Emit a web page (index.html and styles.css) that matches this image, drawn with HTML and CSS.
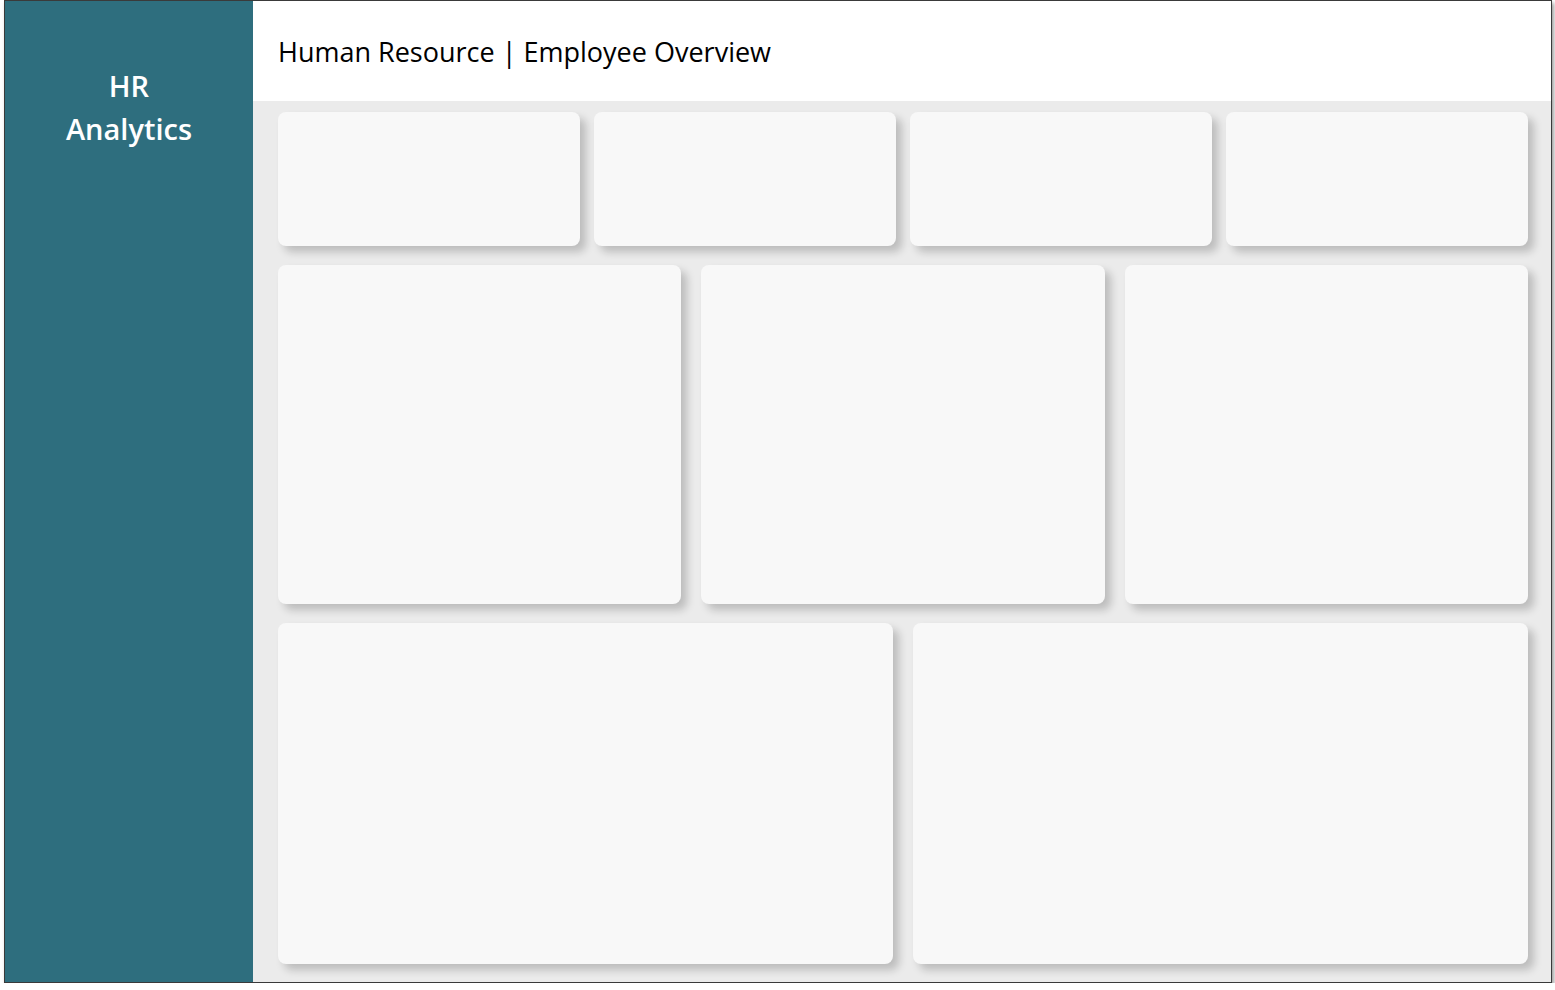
FILE: index.html
```html
<!DOCTYPE html>
<html lang="en">
<head>
    <meta charset="UTF-8">
    <meta name="viewport" content="width=device-width, initial-scale=1.0">
    <title>HR Analytics</title>
    <link rel="stylesheet" href="styles.css">
</head>
<body>

    <div class="frame">
        <aside class="sidebar">
            <h1>HR<br>Analytics</h1>
        </aside>

        <main class="main">
            <header class="header">
                Human Resource | Employee Overview
            </header>

            <div class="content">
                <div class="row row-kpi">
                    <div class="card"></div>
                    <div class="card"></div>
                    <div class="card"></div>
                    <div class="card"></div>
                </div>

                <div class="row row-mid">
                    <div class="card"></div>
                    <div class="card"></div>
                    <div class="card"></div>
                </div>

                <div class="row row-bottom">
                    <div class="card"></div>
                    <div class="card"></div>
                </div>
            </div>
        </main>
    </div>

</body>
</html>
```

FILE: styles.css
```css
body {
    margin: 0;
    padding: 0 0 0 4px;
    font-family: 'Open Sans', 'Noto Sans', sans-serif;
    background: #ffffff;
}

.frame {
    display: flex;
    width: 1548px;
    height: 983px;
    box-sizing: border-box;
    border: 1px solid #3a3a3a;
    box-shadow: 2px 3px 4px rgba(0, 0, 0, 0.4);
}

.sidebar {
    width: 248px;
    flex-shrink: 0;
    background: #2e6e7e;
    color: #ffffff;
    text-align: center;
}

.sidebar h1 {
    margin: 63px 0 0;
    font-size: 29px;
    font-weight: 600;
    line-height: 43px;
}

.main {
    flex: 1;
    display: flex;
    flex-direction: column;
    background: #ebebeb;
}

.header {
    height: 100px;
    flex-shrink: 0;
    background: #ffffff;
    color: #000000;
    font-size: 27px;
    padding-left: 25px;
    display: flex;
    align-items: center;
    box-sizing: border-box;
    padding-bottom: 0;
}

.content {
    flex: 1;
    display: flex;
    flex-direction: column;
    gap: 19px;
    padding: 11px 23px 18px 25px;
}

.row {
    display: grid;
    gap: 20px;
}

.row-kpi {
    grid-template-columns: repeat(4, 1fr);
    gap: 14px;
    height: 134px;
}

.row-mid {
    grid-template-columns: repeat(3, 1fr);
    height: 339px;
}

.row-bottom {
    grid-template-columns: repeat(2, 1fr);
    flex: 1;
}

.card {
    background: #f8f8f8;
    border-radius: 8px;
    box-shadow: 6px 6px 8px rgba(0, 0, 0, 0.2);
}
```
